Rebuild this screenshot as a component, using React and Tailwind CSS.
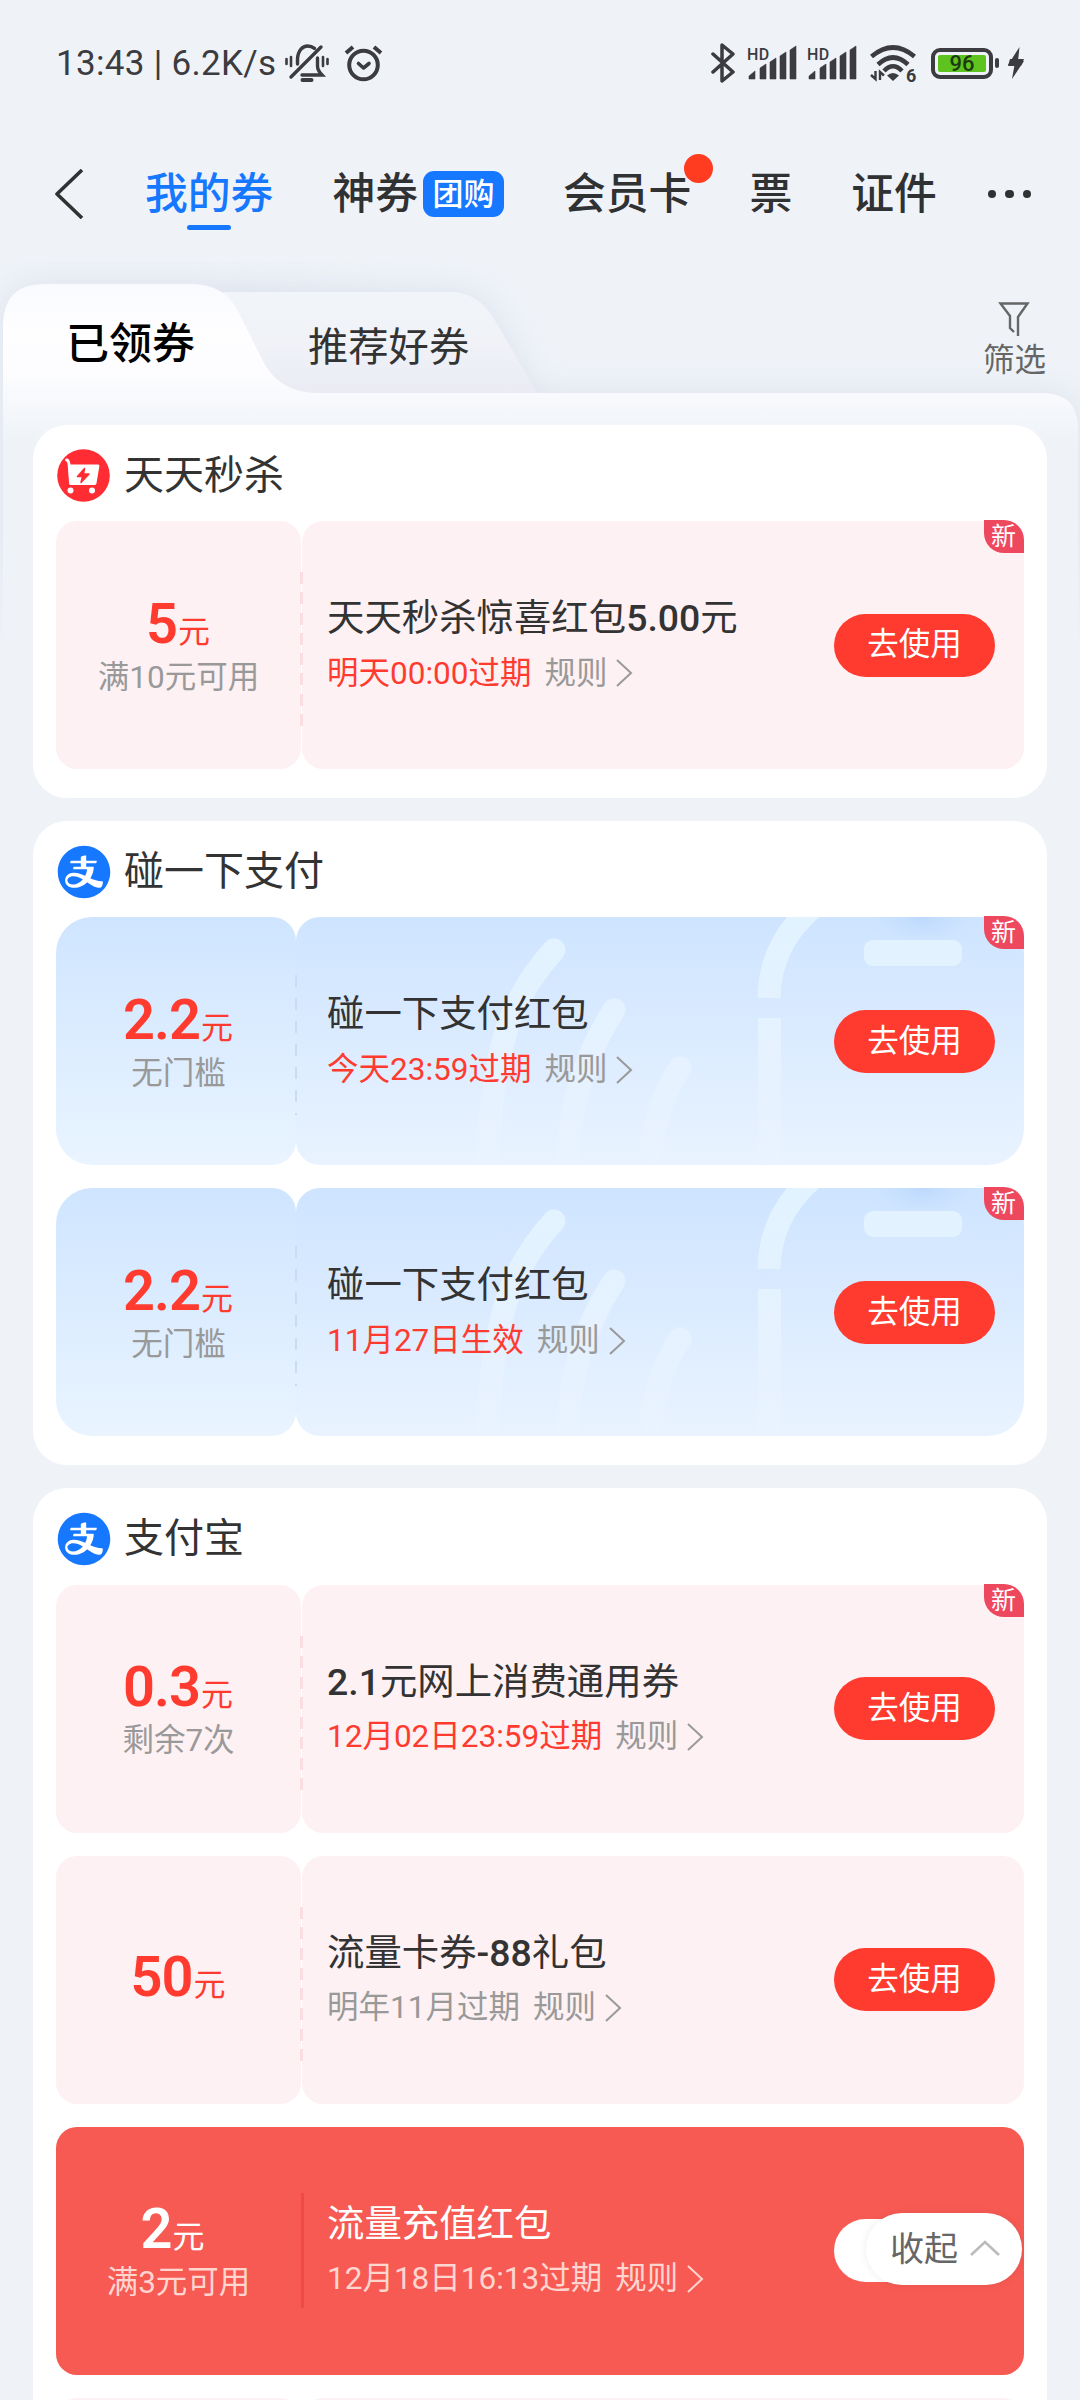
//Coupon wallet page
import React from "react";
import { AiFillAlipayCircle } from "react-icons/ai";

const sections = [
  {
    title: "天天秒杀",
    icon: "cart",
    coupons: [
      { amount: "5", limit: "满10元可用", name: "天天秒杀惊喜红包5.00元", expire: "明天00:00过期", urgent: true, isNew: true, theme: "pink" },
    ],
  },
  {
    title: "碰一下支付",
    icon: "alipay",
    coupons: [
      { amount: "2.2", limit: "无门槛", name: "碰一下支付红包", expire: "今天23:59过期", urgent: true, isNew: true, theme: "blue" },
      { amount: "2.2", limit: "无门槛", name: "碰一下支付红包", expire: "11月27日生效", urgent: true, isNew: true, theme: "blue" },
    ],
  },
  {
    title: "支付宝",
    icon: "alipay",
    coupons: [
      { amount: "0.3", limit: "剩余7次", name: "2.1元网上消费通用券", expire: "12月02日23:59过期", urgent: true, isNew: true, theme: "pink" },
      { amount: "50", name: "流量卡券-88礼包", expire: "明年11月过期", theme: "pink" },
      { amount: "2", limit: "满3元可用", name: "流量充值红包", expire: "12月18日16:13过期", theme: "red" },
      { amount: "", name: "", expire: "", theme: "pink" },
    ],
  },
];

function Signal() {
  return (
    <div className="flex items-end h-[36px] relative w-[52px]">
      <span className="absolute left-0 top-[2px] text-[16px] leading-none font-medium tracking-[0.5px]">HD</span>
      <svg width="52" height="36" viewBox="0 0 52 36" fill="#3b3b40">
        <path d="M2 34v-3l6-5v8zM13 34V23l6-4v15zM23 34V17l6-4v21zM33 34V11l6-4v27zM43 34V5l6-4v33z" stroke="#3b3b40" strokeWidth="0.6" strokeLinejoin="round" />
      </svg>
    </div>
  );
}

function StatusBar() {
  return (
    <div className="h-[126px] flex items-center pl-[56px] text-[#3b3b40]">
      <span className="text-[35px] leading-none whitespace-nowrap w-[229px] tracking-[0.3px]">
        13:43<span className="mx-[9px]">|</span>6.2K/s
      </span>
      <svg width="44" height="38" viewBox="0 0 44 38" fill="none" stroke="#3b3b40" strokeWidth="3.4" strokeLinecap="round">
        <path d="M6 33L36 3" />
        <path d="M12.5 20v-5C13 6 18 2 22.500 2c2.600 0 5 .8 7 2.400" />
        <path d="M32.500 14v8c0 3.500 1.500 6 4.500 9H17" />
        <path d="M17.500 36h9" strokeWidth="4" />
        <path d="M1.500 15v5M6 13v9M38 13v9M42.500 15v5" strokeWidth="2.600" />
      </svg>
      <svg className="ml-[15px]" width="39" height="38" viewBox="0 0 39 38" fill="none" stroke="#3b3b40" strokeWidth="4" strokeLinecap="round" strokeLinejoin="round">
        <circle cx="19.500" cy="21" r="14.300" />
        <path d="M14.500 19.500l5 4.500 5.500-4.500" strokeWidth="3.600" />
        <path d="M2 9l7-6M37 9l-7-6" strokeLinecap="butt" />
      </svg>
      <svg className="ml-[328px]" width="24" height="40" viewBox="0 0 24 40" fill="none" stroke="#3b3b40" strokeWidth="3.500" strokeLinecap="round" strokeLinejoin="round">
        <path d="M2 11l20 18-11 9V2l11 9L2 29" />
      </svg>
      <div className="ml-[12px]"><Signal /></div>
      <div className="ml-[8px]"><Signal /></div>
      <div className="relative ml-[11px]">
        <svg width="47" height="38" viewBox="0 0 47 38" fill="none" stroke="#3b3b40" strokeWidth="4.600">
          <path d="M1.500 12.500Q23 -5.500 44.500 12.500" />
          <path d="M8 20.500Q23 6.500 38 20.500" />
          <path d="M14 27Q23 17.500 32 27" />
          <path d="M17 31.500Q23 26.500 29 31.500L23 37z" fill="#3b3b40" stroke="none" />
          <path d="M5.500 27v8L1 31M10 36v-8l4 3.500" strokeWidth="2.400" />
        </svg>
        <span className="absolute left-[36px] top-[23px] text-[18px] leading-none font-bold">6</span>
      </div>
      <div className="ml-[14px] w-[62px] h-[31px] rounded-[9px] border-4 border-[#3b3b40] p-[3px]">
        <div className="h-full bg-[#5ec31f] rounded-[2px] text-[22px] text-[#1c3a10] leading-[18px] text-center font-medium">96</div>
      </div>
      <div className="w-1 h-[10px] rounded-full bg-[#3b3b40] ml-[2px]" />
      <svg className="ml-[8px]" width="18" height="32" viewBox="0 0 18 32" fill="#3b3b40">
        <path d="M12.500 0L1 18h6.500L5 32 17 14h-6z" />
        <path d="M3 12h14l-3 7H1z" />
      </svg>
    </div>
  );
}

function NavBar() {
  return (
    <div className="h-[136px] flex items-center pl-[54px] text-[42.8px] leading-none font-medium text-[#303133] whitespace-nowrap">
      <svg width="30" height="50" viewBox="0 0 30 50" fill="none" stroke="#303133" strokeWidth="3.600" strokeLinejoin="round">
        <path d="M28 1L3 25l25 24" />
      </svg>
      <div className="relative ml-[61px] text-[#1677ff]">
        我的券
        <span className="absolute left-[42px] top-[52px] w-11 h-[5px] rounded-full bg-[#1677ff]" />
      </div>
      <span className="ml-[59px]">神券</span>
      <span className="ml-[5px] w-[81px] h-[46px] rounded-[11px] bg-[#1677ff] text-white text-[31px] flex items-center justify-center">
        团购
      </span>
      <div className="relative ml-[59px]">
        会员卡
        <span className="absolute left-[121px] -top-[19px] w-[29px] h-[29px] rounded-full bg-[#ff3b20]" />
      </div>
      <span className="ml-[58px]">票</span>
      <span className="ml-[59px]">证件</span>
      <div className="ml-[51px] flex gap-[9px]">
        <i className="w-[8.5px] h-[8.5px] rounded-full bg-[#303133]" />
        <i className="w-[8.5px] h-[8.5px] rounded-full bg-[#303133]" />
        <i className="w-[8.5px] h-[8.5px] rounded-full bg-[#303133]" />
      </div>
    </div>
  );
}

// folder shaped background behind the two tabs
function TabShape() {
  return (
    <svg className="absolute left-0 top-0 pointer-events-none" width="1080" height="400" viewBox="0 262 1080 400">
      <defs>
        <linearGradient id="front" gradientUnits="userSpaceOnUse" x1="0" y1="284" x2="0" y2="440">
          <stop offset="0" stopColor="#f9faff" />
          <stop offset="0.3" stopColor="#fefeff" />
          <stop offset="0.55" stopColor="#fdfdff" />
          <stop offset="1" stopColor="#eff3f8" />
        </linearGradient>
        <linearGradient id="back" x1="0" y1="0" x2="0" y2="1">
          <stop offset="0" stopColor="#f1f4f8" />
          <stop offset="0.5" stopColor="#f0f2f8" />
          <stop offset="1" stopColor="#e9eaf3" />
        </linearGradient>
        <linearGradient id="sides" gradientUnits="userSpaceOnUse" x1="0" y1="393" x2="0" y2="650">
          <stop offset="0.5" stopColor="#fff" />
          <stop offset="1" stopColor="#000" />
        </linearGradient>
        <filter id="soft" x="-10%" y="-30%" width="120%" height="160%">
          <feGaussianBlur stdDeviation="15" />
        </filter>
        <mask id="fade" maskUnits="userSpaceOnUse" x="0" y="262" width="1080" height="400">
          <rect x="0" y="262" width="1080" height="400" fill="url(#sides)" />
        </mask>
      </defs>
      <g mask="url(#fade)">
        <path filter="url(#soft)" fill="#cdd1e4" opacity="0.55" d="M3 700V324Q4 284 44 284H200L456 292Q484 294 497 322L536 393H1045Q1076 394 1078 425V700z" />
      </g>
      <path fill="url(#back)" d="M200 292H452Q480 293 496 322L540 398H240z" />
      <path
        fill="url(#front)"
        d="M3 650V324Q4 284 44 284H192Q224 284 238 311L264 363Q280 392 316 393H1045Q1076 394 1078 425V650z"
      />
    </svg>
  );
}

function Tabs() {
  return (
    <div className="relative h-[163px]">
      <TabShape />
      <div className="relative flex items-start leading-none">
        <div className="pl-[66px] pt-[61px] text-[43px] font-medium text-black">已领券</div>
        <div className="pl-[113px] pt-[66px] text-[40.3px] text-[#333]">推荐好券</div>
        <div className="ml-auto mr-[34px] pt-[39px] flex flex-col items-center text-[#666] text-[31.5px]">
          <svg width="32" height="36" viewBox="0 0 32 36" fill="none" stroke="#666" strokeWidth="2.400">
            <path d="M20 35V16L29.500 2.500h-27L12 15v12l4 4" />
          </svg>
          <span className="mt-[8px]">筛选</span>
        </div>
      </div>
    </div>
  );
}

function CartLogo() {
  return (
    <svg width="53" height="53" viewBox="0 0 53 53">
      <circle cx="26.500" cy="26.500" r="26.300" fill="#ff2c33" />
      <path d="M9.500 11Q11.500 11 12 15l1.500 19.500h24.500L41 17H12.500" fill="#fff" stroke="#fff" strokeWidth="2.800" strokeLinejoin="round" strokeLinecap="round" />
      <circle cx="13.500" cy="41.500" r="3" fill="#fff" />
      <circle cx="35" cy="41.500" r="3" fill="#fff" />
      <path d="M27.500 19.500l-7 8h5l-1.500 6 8-8.500h-5.500z" fill="#ff2c33" stroke="#ff2c33" strokeWidth="1.500" strokeLinejoin="round" />
    </svg>
  );
}

function AlipayLogo() {
  return (
    <div className="w-[53px] h-[53px] rounded-full bg-white flex items-center justify-center">
      <AiFillAlipayCircle className="w-[60px] h-[60px] shrink-0 text-[#1677ff]" />
    </div>
  );
}

// light strokes printed on the blue coupons
function WaveDecor() {
  return (
    <svg className="absolute left-[241px] top-0" width="727" height="248" viewBox="297 917 727 248" fill="none">
      <defs>
        <linearGradient id="wave" gradientUnits="userSpaceOnUse" x1="0" y1="917" x2="0" y2="1165">
          <stop offset="0" stopColor="#e4f5ff" stopOpacity="0.9" />
          <stop offset="0.6" stopColor="#ecf5ff" stopOpacity="0.6" />
          <stop offset="1" stopColor="#f0f6ff" stopOpacity="0.1" />
        </linearGradient>
        <radialGradient id="glow">
          <stop offset="0" stopColor="#bcd8fd" />
          <stop offset="1" stopColor="#cde4ff" stopOpacity="0" />
        </radialGradient>
      </defs>
      <ellipse cx="922" cy="917" rx="60" ry="34" fill="url(#glow)" />
      <g stroke="url(#wave)" strokeWidth="23">
        <path strokeLinecap="round" d="M554 950Q514 994 502 1046Q490 1092 487 1165" />
        <path strokeLinecap="round" d="M614 1010Q588 1050 577 1094Q569 1125 567 1165" />
        <path strokeLinecap="round" d="M680 1068Q658 1100 651 1150" />
        <path d="M812 908Q770 944 769 998" />
        <path d="M769.500 1018V1165" />
      </g>
      <rect x="864" y="940" width="98" height="26" rx="9" fill="#e3f2ff" />
    </svg>
  );
}

function Divider({ theme }) {
  if (theme === "red") {
    return <span className="absolute left-[245px] top-[66px] w-[3px] h-[115px] bg-[#ee4b45]" />;
  }
  if (theme === "blue") {
    return (
      <span className="absolute left-[239px] top-[58px] w-[2px] h-[140px] bg-[repeating-linear-gradient(to_bottom,#cbdcf1_0px,#cbdcf1_12px,transparent_12px,transparent_23px)]" />
    );
  }
  return (
    <span className="absolute left-[244px] top-[51px] w-[3px] h-[154px] bg-[repeating-linear-gradient(to_bottom,#fbdde2_0px,#fbdde2_12px,transparent_12px,transparent_20.3px)]" />
  );
}

function CouponBack({ theme }) {
  if (theme === "red") {
    return <div className="absolute inset-0 rounded-[21px] bg-[#f75a53]" />;
  }
  if (theme === "blue") {
    return (
      <div className="absolute inset-0 flex rounded-[36px] overflow-hidden">
        <div className="w-[240px] rounded-r-[24px] bg-linear-to-b from-[#cfe5ff] to-[#e9f4ff]" />
        <div className="flex-1 rounded-l-[24px] bg-linear-to-b from-[#cee4ff] to-[#e9f3ff]" />
        <WaveDecor />
      </div>
    );
  }
  return (
    <div className="absolute inset-0 flex gap-[1px]">
      <div className="w-[245px] rounded-[21px] bg-[#fef1f3]" />
      <div className="flex-1 rounded-[21px] bg-[#fef1f3]" />
    </div>
  );
}

function Coupon({ item, folded }) {
  const red = item.theme === "red";
  const muted = red ? "text-[#ffd5d0]" : "text-[#999]";
  return (
    <div className="relative h-[248px] flex items-center shrink-0">
      <CouponBack theme={item.theme} />
      <Divider theme={item.theme} />
      {item.name && (
        <>
          <div className={`relative w-[245px] flex flex-col items-center gap-[10px] leading-none ${item.limit ? "pb-px" : "pb-[5px]"} ${red ? "text-white" : "text-[#ff3b30]"}`}>
            <div className={red ? "pr-[12px]" : "pr-px"}>
              <span className="text-[56px] font-semibold tracking-[-1px]">{item.amount}</span>
              <span className="text-[32px] ml-px">元</span>
            </div>
            {item.limit && <div className={`text-[31.5px] ${muted}`}>{item.limit}</div>}
          </div>
          <div className="relative flex-1 pl-[26px] pb-px flex flex-col gap-[20px] leading-none">
            <div className={`text-[37.4px] ${red ? "text-white" : "text-[#333]"}`}>
              {item.name.split(/([\d.-]+)/).map((part, i) => (
                <span key={i} className={i % 2 ? "font-medium" : ""}>{part}</span>
              ))}
            </div>
            <div className={`text-[31.5px] flex items-center ${muted}`}>
              <span className={item.urgent ? "text-[#ff3b30]" : ""}>{item.expire}</span>
              <span className="ml-[13px]">规则</span>
              <svg className="ml-[8px]" width="18" height="28" viewBox="0 0 18 28" fill="none" stroke="currentColor" strokeWidth="2">
                <path d="M2 1l14 13L2 27" />
              </svg>
            </div>
          </div>
          <button className={`relative mr-[29px] w-[161px] h-[63px] rounded-full text-[31.5px] leading-none ${red ? "bg-white text-white" : "bg-[#ff3a2f] text-white"}`}>
            {!folded && "去使用"}
          </button>
        </>
      )}
      {item.isNew && (
        <span className="absolute right-0 -top-px w-10 h-[33px] rounded-tr-[20px] rounded-bl-[20px] bg-[#ee485f] text-white text-[25px] leading-[33px] pl-[7px]">
          新
        </span>
      )}
      {folded && (
        <div className="absolute right-[2px] top-[86px] w-[156px] h-[72px] rounded-full bg-white shadow-[0_0_8px_rgba(0,0,0,0.08)] flex items-center pl-[24px] text-[34px] leading-none text-[#666]">
          收起
          <svg className="ml-[12px]" width="30" height="17" viewBox="0 0 30 17" fill="none" stroke="#bbb" strokeWidth="2.600">
            <path d="M1 15L15 2l14 13" />
          </svg>
        </div>
      )}
    </div>
  );
}

export default function App() {
  return (
    <div className="w-[1080px] h-[2400px] overflow-hidden bg-[#eff3f8] font-['Roboto','Noto_Sans_CJK_SC',sans-serif]">
      <StatusBar />
      <NavBar />
      <Tabs />
      <div className="relative px-[33px] flex flex-col gap-[23px]">
        {sections.map((section) => (
          <div key={section.title} className="bg-white rounded-[34px] pl-[23px] pr-[23px] pb-[29px]">
            <div className="h-[96.2px] pt-[24px] flex items-start">
              <div className="ml-[1px] h-[53px] flex items-center gap-[14px]">
                {section.icon === "cart" ? <CartLogo /> : <AlipayLogo />}
                <span className="text-[40px] leading-none text-[#333]">{section.title}</span>
              </div>
            </div>
            <div className="flex flex-col gap-[23px]">
              {section.coupons.map((item, i) => (
                <Coupon key={i} item={item} folded={item.theme === "red"} />
              ))}
            </div>
          </div>
        ))}
      </div>
    </div>
  );
}
